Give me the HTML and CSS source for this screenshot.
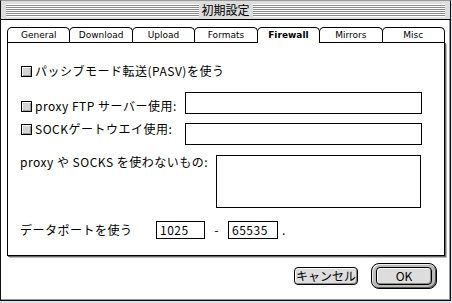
FILE: index.html
```html
<!DOCTYPE html>
<html lang="ja">
<head>
    <meta charset="UTF-8">
    <title>初期設定</title>
    <link rel="stylesheet" href="styles.css">
</head>
<body>

    <div class="window">
        <div class="titlebar">
            <span class="stripes"></span>
            <span class="title">初期設定</span>
            <span class="stripes"></span>
        </div>

        <div class="dialog">
            <!-- tabs -->
            <div class="tabs">
                <div class="tab">General</div>
                <div class="tab">Download</div>
                <div class="tab">Upload</div>
                <div class="tab">Formats</div>
                <div class="tab selected">Firewall</div>
                <div class="tab">Mirrors</div>
                <div class="tab">Misc</div>
            </div>

            <div class="pane">
                <div class="row row-pasv">
                    <label class="check"><span class="box"></span>パッシブモード転送(PASV)を使う</label>
                </div>

                <div class="row row-proxy">
                    <label class="check"><span class="box"></span>proxy FTP サーバー使用:</label>
                    <div class="field wide"></div>
                </div>

                <div class="row row-socks">
                    <label class="check"><span class="box"></span>SOCKゲートウエイ使用:</label>
                    <div class="field wide"></div>
                </div>

                <div class="row row-except">
                    <span class="label except-label">proxy や SOCKS を使わないもの:</span>
                    <div class="field area"></div>
                </div>

                <div class="row row-port">
                    <span class="label port-label">データポートを使う</span>
                    <div class="field port port-from">1025</div>
                    <span class="dash">-</span>
                    <div class="field port port-to">65535</div>
                    <span class="dot">.</span>
                </div>
            </div>

            <div class="buttons">
                <button class="btn">キャンセル</button>
                <div class="default-ring">
                    <button class="btn ok">OK</button>
                </div>
            </div>
        </div>
    </div>

</body>
</html>
```

FILE: styles.css
```css
body {
    margin: 0;
    background-color: #dfe3ee;
    font-family: "Noto Sans CJK JP", "DejaVu Sans", sans-serif;
    font-size: 12px;
    color: #000;
}

.window {
    width: 451px;
    height: 301px;
    box-sizing: border-box;
    border: 1px solid #111;
    border-top-color: #999;
    background-color: #fff;
    box-shadow: inset -1px -1px 0 #999;
}

/* title bar with the pinstripes */
.titlebar {
    display: flex;
    align-items: center;
    height: 18px;
    padding: 0 5px;
    background-color: #ddd;
    border-bottom: 1px solid #000;
}

.stripes {
    flex: 1;
    height: 12px;
    background: repeating-linear-gradient(#fff 0 1px, #8a8a8a 1px 2px);
    border-bottom: 1px solid #fff;
}

.title {
    padding: 0 3px;
    font-size: 12px;
    line-height: 18px;
}

.dialog {
    padding: 7px 0 0 6px;
}

/* tab strip */
.tabs {
    display: flex;
    width: 438px;
    height: 15px;
}

.tab {
    flex: 1;
    margin-left: -1px;
    border: 1px solid #000;
    border-bottom: none;
    border-radius: 5px 5px 0 0;
    font-family: "DejaVu Sans", sans-serif;
    font-size: 9px;
    line-height: 14px;
    text-align: center;
    background-color: #fff;
}

.tab:first-child {
    margin-left: 0;
}

.tab.selected {
    position: relative;
    z-index: 1;
    height: 15px;
    font-weight: bold;
}

.pane {
    width: 438px;
    height: 214px;
    box-sizing: border-box;
    border: 1px solid #000;
    box-shadow: 1px 1px 0 #666, 2px 2px 0 #bbb;
    letter-spacing: 0.5px;
}

.row {
    display: flex;
    align-items: flex-start;
    line-height: 16px;
}

.check {
    display: flex;
    align-items: center;
    width: 164px;
    padding-left: 13px;
    height: 16px;
    white-space: nowrap;
}

.row-pasv .check {
    width: auto;
}

.box {
    width: 9px;
    height: 9px;
    margin-right: 3px;
    border: 1px solid #000;
    background-color: #d4d4d4;
    box-shadow: inset 1px 1px 0 #fff, inset -1px -1px 0 #999;
}

.field {
    box-sizing: border-box;
    border: 1px solid #000;
    background-color: #fff;
}

.field.wide {
    width: 237px;
    height: 22px;
}

.row-pasv {
    margin-top: 20px;
}

.row-proxy {
    margin-top: 13px;
}

.row-proxy .check {
    margin-top: 6px;
}

.row-socks {
    margin-top: 7px;
}

.row-socks .field {
    margin-top: 2px;
}

.row-except {
    margin-top: 9px;
}

.label {
    padding-left: 12px;
    white-space: nowrap;
}

.except-label {
    width: 196px;
}

.field.area {
    width: 205px;
    height: 53px;
    margin-top: 1px;
}

.row-port {
    margin-top: 13px;
    align-items: center;
}

.port-label {
    width: 136px;
}

.field.port {
    height: 18px;
    padding-left: 3px;
    line-height: 16px;
}

.port-from {
    width: 49px;
}

.port-to {
    width: 50px;
}

.dash {
    width: 23px;
    text-align: center;
}

.dot {
    padding-left: 4px;
}

/* bottom buttons */
.buttons {
    display: flex;
    justify-content: flex-end;
    align-items: center;
    gap: 13px;
    padding: 7px 13px 0 0;
}

.btn {
    height: 18px;
    padding: 0;
    border: 1px solid #000;
    border-radius: 4px;
    background-color: #ddd;
    box-shadow: inset 1px 1px 0 #fff, inset -1px -1px 0 #888;
    font-family: inherit;
    font-size: 12px;
    line-height: 16px;
    width: 64px;
    color: #000;
}

.default-ring {
    padding: 3px 4px;
    border: 1px solid #000;
    border-radius: 8px;
    background-color: #bbb;
    box-shadow: inset 1px 1px 0 #eee, inset -1px -1px 0 #555;
}

.btn.ok {
    display: block;
    width: 56px;
}
```
